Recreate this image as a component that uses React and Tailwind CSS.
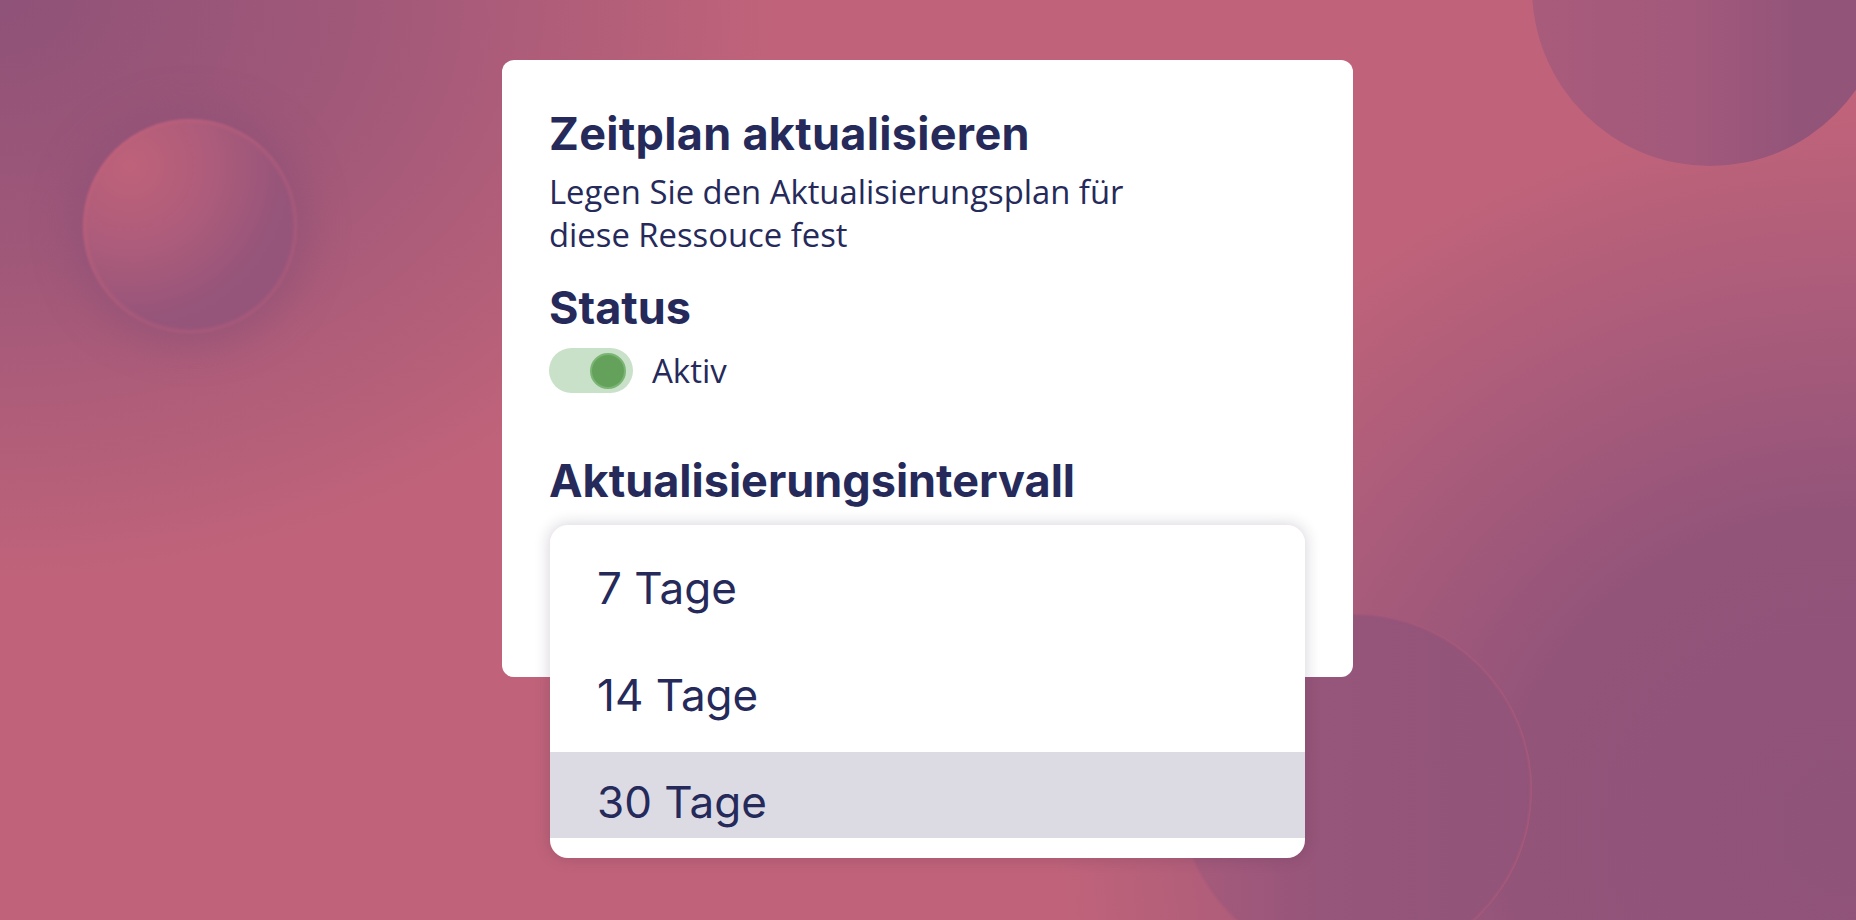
import React from "react";

export default function App() {
  const items = [
    { label: "7 Tage", active: false },
    { label: "14 Tage", active: false },
    { label: "30 Tage", active: true },
  ];
  return (
    <div className="relative w-[1856px] h-[920px] overflow-hidden bg-[#c0637a] bg-[radial-gradient(ellipse_1000px_750px_at_0%_0%,#8f5278_0%,rgba(143,82,120,0.65)_35%,rgba(143,82,120,0)_78%),radial-gradient(ellipse_1000px_900px_at_100%_90%,#8f5278_0%,#93547a_35%,rgba(143,82,120,0)_80%)]">
      {/* decorative circles */}
      <div className="absolute left-[1532px] top-[-190px] w-[356px] h-[356px] rounded-full bg-[linear-gradient(90deg,#a95b7b_0%,#a2597b_45%,#93547a_75%)]" />
      <div className="absolute left-[83px] top-[119px] w-[214px] h-[214px] rounded-full bg-[radial-gradient(circle_at_22%_22%,#bf627a_0%,#ad5c7b_35%,#96557a_65%,#93547a_100%)] shadow-[0_0_34px_14px_rgba(140,80,118,0.55),inset_0_0_4px_2px_rgba(200,100,125,0.55)] blur-[1px]" />
      <div className="absolute left-[1178px] top-[613px] w-[354px] h-[354px] rounded-full bg-[linear-gradient(90deg,#a75b7b_0%,#96557a_40%,#92547a_100%)] shadow-[inset_0_0_3px_1px_rgba(190,95,122,0.7)]" />

      <div className="relative flex pl-[502px] pt-[60px]">
        <div className="w-[851px] h-[617px] rounded-[12px] bg-white px-[47px] pt-[47px] text-[#252a5a] flex flex-col">
          <h1 className="font-['Inter',sans-serif] font-bold text-[45px] leading-[54px] tracking-[0.3px]">
            Zeitplan aktualisieren
          </h1>
          <p className="mt-[9px] w-[600px] font-['Open_Sans',sans-serif] text-[32.8px] leading-[43px]">
            Legen Sie den Aktualisierungsplan für diese Ressouce fest
          </p>
          <h2 className="mt-[25px] font-['Inter',sans-serif] font-bold text-[45px] leading-[54px]">
            Status
          </h2>
          <div className="mt-[13px] flex items-center gap-[19px] h-[45px]">
            <div className="w-[84px] h-[45px] rounded-full bg-[#c9e0c9] flex items-center justify-end pr-[7px]">
              <div className="w-[36px] h-[36px] rounded-full bg-[#64a25c] border-[2px] border-[#7ab574]" />
            </div>
            <span className="font-['Open_Sans',sans-serif] text-[33px] leading-[45px]">Aktiv</span>
          </div>
          <h2 className="mt-[61px] font-['Inter',sans-serif] font-bold text-[45px] leading-[54px]">
            Aktualisierungsintervall
          </h2>
          <div className="mt-[17px] ml-[1px] w-[755px] shrink-0 rounded-[18px] bg-white shadow-[0_0_14px_2px_rgba(60,40,70,0.18)] pt-[13px] pb-[20px] flex flex-col gap-[21px] overflow-hidden">
            {items.map((it) => (
              <div
                key={it.label}
                className={
                  "h-[86px] pl-[47px] pt-[14px] leading-[72px] font-['Inter',sans-serif] text-[44px] font-normal " +
                  (it.active ? "bg-[#dcdbe4]" : "bg-white")
                }
              >
                {it.label}
              </div>
            ))}
          </div>
        </div>
      </div>
    </div>
  );
}
